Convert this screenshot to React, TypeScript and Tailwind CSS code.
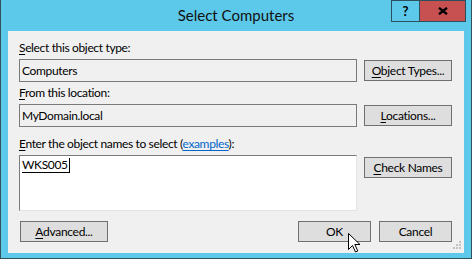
import React from 'react'

const Key = ({ children }: { children: React.ReactNode }) => (
  <span className="underline underline-offset-[2px] decoration-1">{children}</span>
)

const Button = ({
  children,
  className = '',
}: {
  children: React.ReactNode
  className?: string
}) => (
  <button
    type="button"
    className={`h-[21px] border border-[#707070] bg-[#dedede] text-[12px] leading-none tracking-[-0.3px] text-black ${className}`}
  >
    {children}
  </button>
)

const Arrow = () => (
  <svg width="13" height="20" viewBox="0 0 13 20" className="absolute left-[347px] top-[233px]">
    <path
      d="M0.5 0.5 L0.5 16.5 L4.5 12.5 L7.5 19 L9.8 18 L6.8 11.5 L12 11.5 Z"
      fill="#ffffff"
      stroke="#000000"
      strokeWidth="1"
      strokeLinejoin="miter"
    />
  </svg>
)

const Grip = () => (
  <svg width="9" height="9" viewBox="0 0 9 9" className="absolute right-[3px] bottom-[4px]">
    <rect x="7" y="1" width="2" height="2" fill="#c2c2c2" />
    <rect x="4" y="4" width="2" height="2" fill="#c2c2c2" />
    <rect x="7" y="4" width="2" height="2" fill="#c2c2c2" />
    <rect x="1" y="7" width="2" height="2" fill="#c2c2c2" />
    <rect x="4" y="7" width="2" height="2" fill="#c2c2c2" />
    <rect x="7" y="7" width="2" height="2" fill="#c2c2c2" />
  </svg>
)

export default function App() {
  return (
    <div className="relative w-[472px] h-[259px] bg-[#5cc8ea] border-x border-b border-[#34505c] flex flex-col font-['Lato',sans-serif] text-black">
      {/* title bar */}
      <div className="h-[31px] grid grid-cols-[1fr_auto_1fr]">
        <div />
        <div className="pt-[5px] text-[15px] leading-[20px] text-[#111]">Select Computers</div>
        <div className="flex justify-end items-start pr-[5px]">
          <div className="w-[29px] h-[22px] border border-[#2c4f5e] flex items-center justify-center text-[13px] font-bold leading-none">
            ?
          </div>
          <div className="-ml-[1px] w-[47px] h-[22px] border border-[#2c4f5e] bg-[#c75050] flex items-center justify-center">
            <svg width="10" height="8" viewBox="0 0 10 8">
              <path d="M1 0.8 L9 7.2 M9 0.8 L1 7.2" stroke="#000" strokeWidth="2.3" />
            </svg>
          </div>
        </div>
      </div>

      {/* client area */}
      <div className="relative mx-[7px] h-[222px] bg-[#f0f0f0] flex flex-col pt-[9px] pl-[11px] pr-[12px] pb-[11px] text-[12px] tracking-[-0.35px]">
        <div className="leading-[15px]">
          <Key>S</Key>elect this object type:
        </div>
        <div className="mt-[4px] flex items-center gap-[7px]">
          <div className="w-[338px] h-[23px] border border-[#7a7a7a] flex items-center pl-[2px]">Computers</div>
          <Button className="w-[88px]">
            <Key>O</Key>bject Types...
          </Button>
        </div>

        <div className="mt-[3px] leading-[15px]">
          <Key>F</Key>rom this location:
        </div>
        <div className="mt-[4px] flex items-center gap-[7px]">
          <div className="w-[338px] h-[23px] border border-[#7a7a7a] flex items-center pl-[2px]">MyDomain.local</div>
          <Button className="w-[88px]">
            <Key>L</Key>ocations...
          </Button>
        </div>

        <div className="mt-[9px] leading-[15px]">
          <Key>E</Key>nter the object names to select (
          <span className="text-[#0066cc] underline underline-offset-[2px]">examples</span>):
        </div>
        <div className="mt-[4px] flex items-start gap-[7px]">
          <div className="w-[338px] h-[56px] bg-white border-t border-l border-[#7a7a7a] border-r-[#e3e3e3] border-b-[#e3e3e3] border-r border-b pl-[2px]">
            <span className="inline-block leading-[14px] border-b border-r border-black pr-[1px]">WKS005</span>
          </div>
          <Button className="mt-[2px] w-[88px]">
            <Key>C</Key>heck Names
          </Button>
        </div>

        <div className="mt-[10px] flex items-center">
          <Button className="ml-[1px] w-[88px]">
            <Key>A</Key>dvanced...
          </Button>
          <Button className="ml-auto w-[73px] border-[#3c7fb1] bg-[#c4e5f8]">OK</Button>
          <Button className="ml-[8px] w-[73px]">Cancel</Button>
        </div>

        <Grip />
      </div>

      <Arrow />
    </div>
  )
}
